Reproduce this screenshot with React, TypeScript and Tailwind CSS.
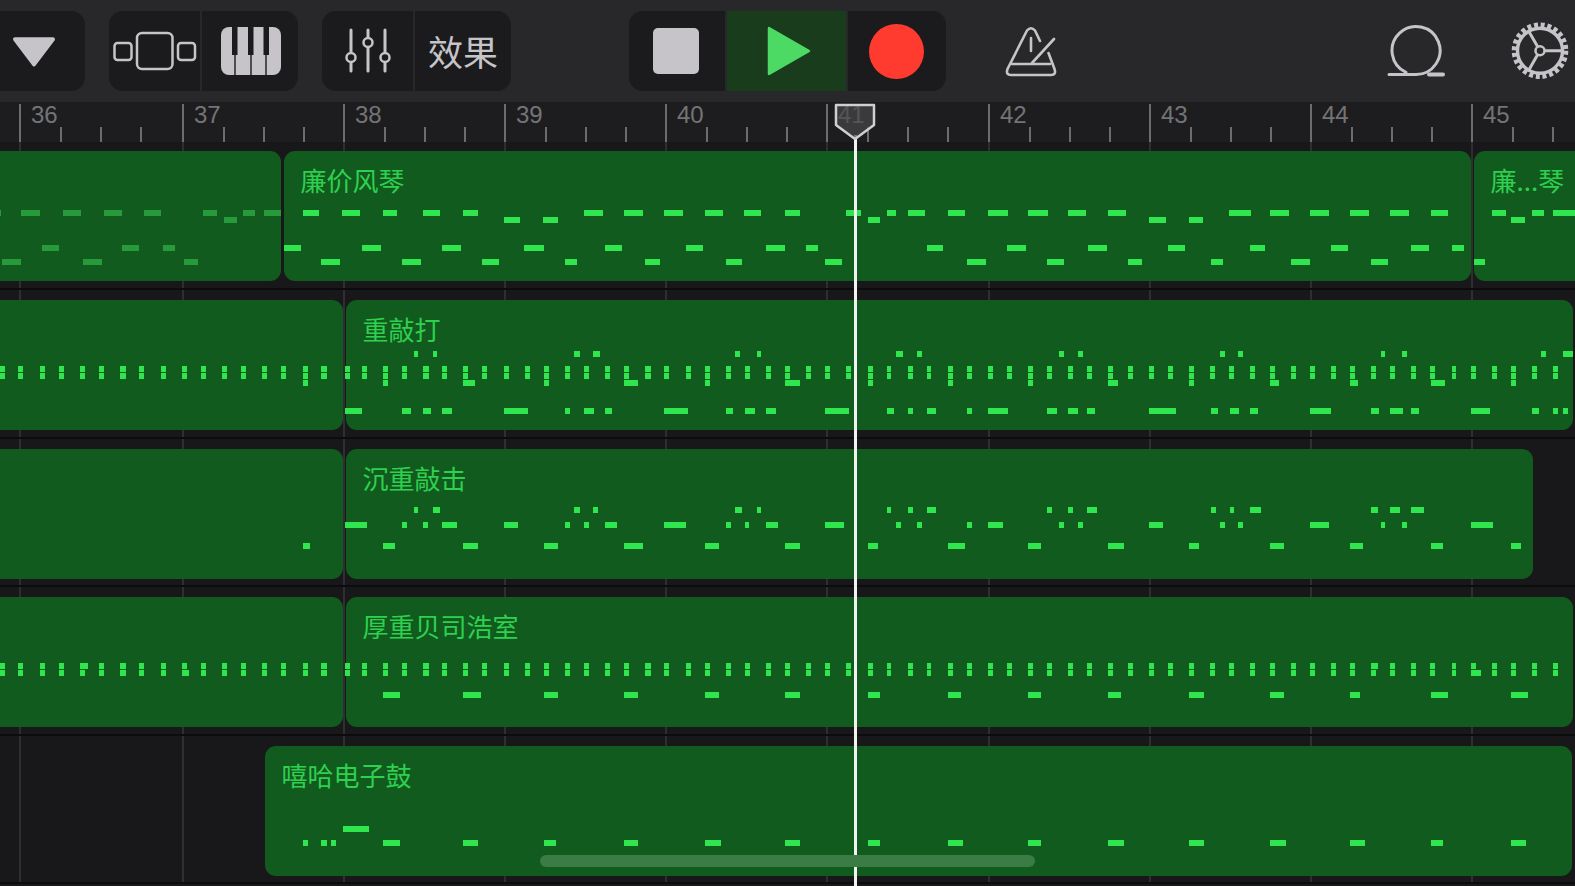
import type { ReactNode } from "react";

const FONT = { fontFamily: '"Noto Sans CJK SC", "Liberation Sans", sans-serif' };

// Bar lines in page pixels, bar 36 first
const BARS = [
  { n: 36, x: 19 },
  { n: 37, x: 182 },
  { n: 38, x: 343 },
  { n: 39, x: 504 },
  { n: 40, x: 665 },
  { n: 41, x: 826 },
  { n: 42, x: 988 },
  { n: 43, x: 1149 },
  { n: 44, x: 1310 },
  { n: 45, x: 1471 },
];

const ROW_TOPS = [142, 290.4, 438.8, 587.2, 735.6];

// Note positions were traced from two crops, so each half has its own scale
const fromLeft = (v: number) => v / 1.96;
const fromRight = (v: number) => 800 + v / 2.023;

interface Lane {
  y: number;
  left?: number[];
  right?: number[];
  dim?: boolean;
}

const SIXTEENTHS_LEFT = [
  0, 36, 78, 115, 157, 194, 236, 273, 315, 357, 394, 435, 472, 514, 551, 593, 630, 676, 709, 751, 788, 830, 866, 908,
  945, 987, 1029, 1066, 1107, 1145, 1186, 1223, 1265, 1302, 1344, 1381, 1423, 1460, 1501, 1538,
].flatMap((x) => [x, x + 10]);

const SIXTEENTHS_RIGHT = [
  12, 51, 93, 137, 175, 218, 256, 299, 337, 380, 419, 461, 500, 543, 581, 624, 663, 706, 745, 787, 830, 868, 911, 950,
  993, 1031, 1074, 1112, 1155, 1194, 1237, 1275, 1318, 1357, 1400, 1438, 1481, 1524,
].flatMap((x) => [x, x + 10]);

const LANES: Lane[][] = [
  [
    { y: 212.7, dim: true, left: [0, 2, 41, 78, 124, 158, 203, 240, 282, 316, 398, 426, 476, 500, 518, 551] },
    { y: 219.7, dim: true, left: [440, 464] },
    { y: 248, dim: true, left: [83, 116, 240, 273, 319, 343] },
    { y: 262.3, dim: true, left: [4, 41, 162, 199, 361, 389] },
    {
      y: 212.7,
      left: [593, 626, 671, 705, 751, 779, 829, 862, 907, 937, 1145, 1182, 1223, 1260, 1301, 1339, 1381, 1418, 1459, 1492, 1538, 1568],
      right: [93, 123, 175, 195, 218, 253, 299, 333, 380, 420, 461, 501, 543, 578, 624, 660, 868, 912, 950, 989, 1031, 1070, 1113, 1152, 1194, 1233, 1276, 1310, 1399, 1429, 1481, 1505, 1524, 1568],
    },
    { y: 219.7, left: [987, 1019, 1065, 1094], right: [137, 162, 706, 740, 787, 816, 1438, 1467] },
    {
      y: 248,
      left: [556, 589, 709, 747, 866, 904, 1028, 1066, 1186, 1219, 1344, 1377, 1501, 1539],
      right: [12, 37, 256, 290, 419, 458, 582, 621, 745, 779, 911, 941, 1074, 1109, 1237, 1272, 1318, 1343],
    },
    {
      y: 262.3,
      left: [630, 667, 788, 825, 945, 978, 1107, 1131, 1265, 1294, 1423, 1455],
      right: [51, 85, 338, 376, 500, 534, 663, 692, 831, 855, 993, 1032, 1156, 1190, 1363, 1386],
    },
  ],
  [
    {
      y: 354.3,
      left: [811, 820, 848, 857, 1126, 1136, 1162, 1177, 1441, 1450, 1483, 1492],
      right: [194, 209, 237, 247, 524, 534, 562, 572, 850, 859, 887, 897, 1175, 1184, 1218, 1227, 1500, 1509, 1543, 1563],
    },
    { y: 368.7, left: SIXTEENTHS_LEFT, right: SIXTEENTHS_RIGHT },
    { y: 375.7, left: SIXTEENTHS_LEFT, right: SIXTEENTHS_RIGHT },
    {
      y: 382.7,
      left: [593, 603, 751, 760, 908, 932, 1066, 1076, 1223, 1251, 1381, 1391, 1539, 1568],
      right: [137, 147, 299, 309, 461, 471, 624, 644, 787, 797, 950, 970, 1113, 1128, 1276, 1305, 1438, 1448],
    },
    {
      y: 411,
      left: [677, 710, 787, 806, 830, 844, 866, 885, 987, 1034, 1107, 1117, 1145, 1164, 1186, 1200, 1302, 1349, 1423, 1437, 1460, 1479, 1501, 1520],
      right: [51, 99, 175, 190, 218, 228, 256, 276, 338, 348, 380, 420, 500, 520, 543, 563, 581, 597, 706, 760, 831, 846, 869, 888, 911, 927, 1031, 1075, 1156, 1171, 1194, 1219, 1237, 1252, 1357, 1396, 1481, 1496, 1524, 1534, 1543, 1553],
    },
  ],
  [
    {
      y: 510.3,
      left: [811, 820, 848, 862, 1126, 1136, 1162, 1172, 1441, 1455, 1483, 1492],
      right: [175, 185, 218, 228, 256, 276, 500, 510, 543, 553, 581, 601, 831, 841, 869, 879, 911, 932, 1156, 1170, 1194, 1214, 1237, 1262],
    },
    {
      y: 524.7,
      left: [677, 719, 788, 798, 830, 839, 866, 895, 987, 1015, 1107, 1117, 1145, 1154, 1186, 1210, 1302, 1345, 1423, 1432, 1460, 1469, 1501, 1525],
      right: [51, 90, 194, 204, 237, 247, 338, 348, 380, 410, 524, 534, 562, 572, 706, 735, 850, 859, 887, 897, 1031, 1070, 1175, 1184, 1218, 1228, 1357, 1401],
    },
    {
      y: 545.7,
      left: [593, 607, 751, 774, 908, 937, 1066, 1094, 1223, 1260, 1381, 1409, 1539, 1568],
      right: [137, 157, 299, 333, 461, 487, 624, 655, 787, 807, 950, 980, 1113, 1138, 1276, 1300, 1438, 1458],
    },
  ],
  [
    { y: 666.3, left: [...SIXTEENTHS_LEFT, 157, 172], right: [...SIXTEENTHS_RIGHT, 1155, 1170] },
    { y: 673.3, left: [...SIXTEENTHS_LEFT, 357, 371], right: [...SIXTEENTHS_RIGHT, 1357, 1377] },
    {
      y: 694.7,
      left: [751, 784, 908, 942, 1066, 1094, 1223, 1251, 1381, 1409, 1539, 1568],
      right: [137, 162, 299, 325, 461, 487, 624, 650, 787, 817, 950, 980, 1113, 1133, 1276, 1310, 1438, 1473],
    },
  ],
  [
    { y: 829.3, left: [672, 723] },
    {
      y: 843.3,
      left: [593, 603, 630, 640, 648, 658, 751, 784, 908, 937, 1066, 1090, 1223, 1251, 1381, 1414, 1539, 1568],
      right: [137, 162, 299, 329, 461, 487, 624, 655, 787, 817, 950, 984, 1113, 1143, 1276, 1300, 1438, 1468],
    },
  ],
];

function Notes({ lanes, rowTop }: { lanes: Lane[]; rowTop: number }) {
  const spans: ReactNode[] = [];
  lanes.forEach((lane, laneIndex) => {
    const add = (values: number[] | undefined, convert: (v: number) => number, side: string) => {
      if (!values) return;
      for (let i = 0; i < values.length; i += 2) {
        const start = convert(values[i]);
        spans.push(
          <span
            key={`${laneIndex}-${side}-${i}`}
            className={`absolute h-[6px] ${lane.dim ? "bg-[#279a3b]" : "bg-[#2fe64f]"}`}
            style={{ left: start, top: lane.y - 3 - rowTop, width: convert(values[i + 1]) - start }}
          />
        );
      }
    };
    add(lane.left, fromLeft, "l");
    add(lane.right, fromRight, "r");
  });
  return <>{spans}</>;
}

function Clip({ title, className }: { title?: string; className: string }) {
  return (
    <div className={`h-[130px] shrink-0 rounded-[11px] bg-[#115b1f] pl-[16.5px] pt-[13px] text-[26px] leading-[32px] text-[#2fd04f] ${className}`}>
      {title}
    </div>
  );
}

function TrackRow({ index, children }: { index: number; children: ReactNode }) {
  return (
    <div className={`relative h-[148.4px] overflow-hidden border-b-2 border-[#0c0c0e] ${index === 0 ? "pt-[9px]" : "pt-[10px]"}`}>
      <div className="flex">{children}</div>
      <Notes lanes={LANES[index]} rowTop={ROW_TOPS[index]} />
    </div>
  );
}

function Group({ className, children }: { className: string; children: ReactNode }) {
  return <div className={`flex h-20 shrink-0 overflow-hidden rounded-[14px] bg-[#1b1b1d] ${className}`}>{children}</div>;
}

const ICON = "#c6c4c8";

function Toolbar() {
  return (
    <div className="flex h-[102px] items-center bg-[#28282a]">
      <Group className="-ml-5 w-[105px] items-center justify-end">
        <svg viewBox="0 0 45 32" className="mr-[28px] h-[33px] w-[46px]">
          <path d="M4 4 H41 L22.5 28.5 Z" fill={ICON} stroke={ICON} strokeWidth="4" strokeLinejoin="round" />
        </svg>
      </Group>
      <Group className="ml-[24px] w-[189px]">
        <div className="flex w-[93px] items-center justify-center border-r-2 border-[#28282a]">
          <svg viewBox="112 30 86 42" className="h-[42px] w-[86px]" fill="none" stroke={ICON} strokeWidth="2.5">
            <rect x="114.5" y="43" width="17" height="17" rx="3" />
            <rect x="137" y="33" width="35.5" height="36" rx="5" />
            <rect x="178" y="43" width="17" height="17" rx="3" />
          </svg>
        </div>
        <div className="flex flex-1 items-center justify-center">
          <svg viewBox="221 27 60 48" className="ml-[2px] h-12 w-[60px]">
            <rect x="221" y="27" width="60" height="48" rx="8" fill={ICON} />
            <path d="M232 27 h5.5 v28 h-5.5 z M248 27 h5.5 v28 h-5.5 z M263.5 27 h5.5 v28 h-5.5 z" fill="#1b1b1d" />
            <path d="M235 55 V75 M251 55 V75 M266 55 V75" stroke="#1b1b1d" strokeWidth="1.4" />
          </svg>
        </div>
      </Group>
      <Group className="ml-[24px] w-[189px]">
        <div className="flex w-[93px] items-center justify-center border-r-2 border-[#28282a]">
          <svg viewBox="342 27 50 48" className="h-12 w-[50px]" fill="none" stroke={ICON} strokeWidth="3" strokeLinecap="round">
            <path d="M350 30 V52 M350 63 V71 M367 30 V37 M367 48 V71 M384 30 V52 M384 63 V71" />
            <circle cx="350" cy="57.5" r="4.5" strokeWidth="2.5" />
            <circle cx="367" cy="42.5" r="4.5" strokeWidth="2.5" />
            <circle cx="384" cy="57.5" r="4.5" strokeWidth="2.5" />
          </svg>
        </div>
        <div className="flex flex-1 items-center justify-center text-[35px] text-[#c6c4c8]">效果</div>
      </Group>
      <Group className="ml-[118px] w-[317px]">
        <div className="flex w-[98px] items-center justify-center border-r-2 border-[#28282a]">
          <div className="mr-[2px] h-[46px] w-[46px] rounded-[5px] bg-[#c6c4c8]" />
        </div>
        <div className="flex w-[121px] items-center justify-center border-r-2 border-[#28282a] bg-[#183c1c]">
          <svg viewBox="0 0 46 52" className="ml-[5px] h-[52px] w-[46px]">
            <path d="M3 3 L43 26 L3 49 Z" fill="#4cd964" stroke="#4cd964" strokeWidth="2.5" strokeLinejoin="round" />
          </svg>
        </div>
        <div className="flex flex-1 items-center justify-center">
          <div className="mr-[2px] h-[55px] w-[55px] rounded-full bg-[#ff3b30]" />
        </div>
      </Group>
      <svg viewBox="1004 24 54 52" className="ml-[58px] h-[52px] w-[54px] shrink-0" fill="none" stroke={ICON} strokeWidth="2.6" strokeLinecap="round" strokeLinejoin="round">
        <path d="M1040 40 L1035 29.5 Q1031 25 1027 29.5 L1007.5 68 Q1005.5 74 1011 74 L1051 74 Q1056.5 74 1054.5 68 L1048.5 52" />
        <path d="M1012 63 H1050 M1032 62 L1054 38 M1031 37 V50" />
      </svg>
      <svg viewBox="1385 24 62 54" className="ml-[327px] h-[54px] w-[62px] shrink-0" fill="none" stroke={ICON} strokeLinecap="round">
        <path d="M1389 74.5 H1416 A24 24 0 1 0 1406 72.3" strokeWidth="3" />
        <path d="M1429 74.5 H1443" strokeWidth="4" />
      </svg>
      <svg viewBox="1510 22 60 58" className="ml-[64px] h-[58px] w-[60px] shrink-0" fill="none" stroke={ICON}>
        <circle cx="1539" cy="50.7" r="22.5" strokeWidth="3.4" />
        <circle cx="1539" cy="50.7" r="25.8" strokeWidth="5" strokeDasharray="4 2.75" />
        <circle cx="1539" cy="50.7" r="4.5" strokeWidth="2.5" />
        <path d="M1543.5 50.7 H1561 M1536.7 46.8 L1527 30 M1536.7 54.6 L1527 71.5" strokeWidth="3" />
      </svg>
    </div>
  );
}

function Ruler() {
  return (
    <div className="relative h-10 overflow-hidden bg-[#1d1d1f] pl-[19px]">
      <div className="flex">
        {BARS.map((bar, i) => (
          <div
            key={bar.n}
            className="relative h-10 shrink-0 pt-[1px]"
            style={{ width: (BARS[i + 1]?.x ?? 1633) - bar.x }}
          >
            <div className="absolute left-0 top-[2px] h-[38px] w-[2px] bg-[#6c6c6e]" />
            <div className="pl-[12px] text-[24px] leading-[24px] text-[#747476]" style={{ fontFamily: '"Liberation Sans", sans-serif' }}>
              {bar.n}
            </div>
            <div className="absolute left-[41px] top-[25px] h-[15px] w-[2px] bg-[#6c6c6e]" />
            <div className="absolute left-[81px] top-[25px] h-[15px] w-[2px] bg-[#6c6c6e]" />
            <div className="absolute left-[121px] top-[25px] h-[15px] w-[2px] bg-[#6c6c6e]" />
          </div>
        ))}
      </div>
    </div>
  );
}

export default function App() {
  return (
    <div className="relative h-[886px] w-[1575px] overflow-hidden bg-[#18181b]" style={FONT}>
      <Toolbar />
      <Ruler />

      <div className="relative">
        {/* bar lines behind the clips */}
        <div className="absolute inset-0">
          {BARS.map((bar) => (
            <div key={bar.n} className="absolute bottom-0 top-0 w-[2px] bg-[#2f2f32]" style={{ left: bar.x }} />
          ))}
        </div>

        <TrackRow index={0}>
          <Clip className="-ml-5 w-[301px]" />
          <Clip title="廉价风琴" className="ml-[3px] w-[1187px]" />
          <Clip title="廉...琴" className="ml-[3px] w-[130px]" />
        </TrackRow>
        <TrackRow index={1}>
          <Clip className="-ml-5 w-[363px]" />
          <Clip title="重敲打" className="ml-[3px] w-[1227px]" />
        </TrackRow>
        <TrackRow index={2}>
          <Clip className="-ml-5 w-[363px]" />
          <Clip title="沉重敲击" className="ml-[3px] w-[1187px]" />
        </TrackRow>
        <TrackRow index={3}>
          <Clip className="-ml-5 w-[363px]" />
          <Clip title="厚重贝司浩室" className="ml-[3px] w-[1227px]" />
        </TrackRow>
        <TrackRow index={4}>
          <Clip title="嘻哈电子鼓" className="ml-[265px] w-[1307px]" />
        </TrackRow>
      </div>

      {/* playhead */}
      <div className="absolute bottom-0 left-[854px] top-[135px] w-[3px] bg-[#f2f2f2]" />
      <svg viewBox="0 0 42 38" className="absolute left-[834px] top-[103px] h-[38px] w-[42px]">
        <path d="M2 2 H40 V22 L21 36 L2 22 Z" fill="#47474a" fillOpacity="0.7" stroke="#cfcfd1" strokeWidth="2.5" strokeLinejoin="round" />
      </svg>

      {/* scroll indicator */}
      <div className="absolute left-[540px] top-[855px] h-3 w-[495px] rounded-full bg-[#3b7c44]" />
    </div>
  );
}
